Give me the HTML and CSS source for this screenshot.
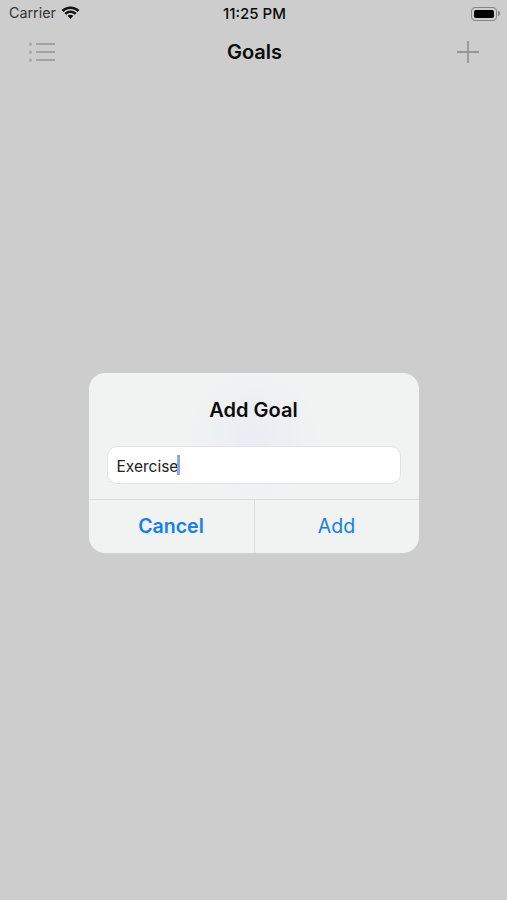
FILE: index.html
```html
<!DOCTYPE html>
<html lang="en">
<head>
  <meta charset="UTF-8" />
  <meta name="viewport" content="width=device-width, initial-scale=1.0"/>
  <title>Goals</title>
  <link rel="stylesheet" href="styles.css">
</head>
<body>
  <div class="status-bar">
    <div class="status-left">
      <span class="carrier">Carrier</span>
      <svg class="wifi" width="19" height="15" viewBox="0 0 19 15">
        <path d="M9.5 3C12.3 3 14.8 4.1 16.6 5.9L18.4 4C16 1.7 12.9.4 9.5.4S3 1.7.6 4l1.8 1.9C4.200 4.100 6.700 3 9.500 3z" fill="#111"/>
        <path d="M9.500 7.100c1.700 0 3.200.7 4.300 1.700l1.800-1.900C14 5.400 11.900 4.500 9.500 4.500S5 5.400 3.400 6.900l1.800 1.900C6.300 7.800 7.800 7.100 9.500 7.100z" fill="#111"/>
        <path d="M9.500 8.700c-1.100 0-2.100.4-2.900 1.100l2.900 3.200 2.900-3.200c-.8-.7-1.800-1.100-2.900-1.100z" fill="#111"/>
      </svg>
    </div>
    <span class="clock">11:25 PM</span>
    <div class="battery">
      <div class="battery-body"><div class="battery-level"></div></div>
      <div class="battery-tip"></div>
    </div>
  </div>

  <header class="nav-bar">
    <svg class="nav-list" width="28" height="22" viewBox="0 0 28 22">
      <circle cx="2.500" cy="3" r="1.600" fill="#a3a3a3"/>
      <circle cx="2.500" cy="11" r="1.600" fill="#a3a3a3"/>
      <circle cx="2.500" cy="19" r="1.600" fill="#a3a3a3"/>
      <path d="M8 3h19M8 11h19M8 19h19" stroke="#a3a3a3" stroke-width="2"/>
    </svg>
    <h1>Goals</h1>
    <svg class="nav-plus" width="22" height="22" viewBox="0 0 22 22">
      <path d="M11 0v22M0 11h22" stroke="#969696" stroke-width="1.800"/>
    </svg>
  </header>

  <main class="overlay">
    <div class="dialog">
      <div class="dialog-body">
        <h2>Add Goal</h2>
        <div class="field"><span>Exercise</span><i class="caret"></i></div>
      </div>
      <div class="dialog-actions">
        <button class="cancel">Cancel</button>
        <button class="add">Add</button>
      </div>
    </div>
  </main>
</body>
</html>
```

FILE: styles.css
```css
body {
  margin: 0;
  height: 900px;
  overflow: hidden;
  display: flex;
  flex-direction: column;
  background-color: #cdcdcd;
  font-family: Inter, 'Liberation Sans', sans-serif;
  color: #0a0a0a;
}

.status-bar {
  height: 27px;
  display: grid;
  grid-template-columns: 1fr auto 1fr;
  align-items: center;
  padding: 0 7px 0 9px;
  font-size: 14px;
}

.status-left {
  display: flex;
  align-items: center;
  gap: 5px;
}

.carrier {
  color: #333;
  font-size: 14.300px;
  padding-bottom: 2px;
}

.clock {
  font-weight: 500;
  font-size: 15px;
  padding-bottom: 1px;
}

.battery {
  justify-self: end;
  display: flex;
  align-items: center;
  gap: 1px;
}

.battery-body {
  width: 26px;
  height: 14px;
  padding: 2px;
  box-sizing: border-box;
  border: 1px solid #858585;
  border-radius: 4px;
}

.battery-level {
  height: 100%;
  background-color: #000;
  border-radius: 2px;
}

.battery-tip {
  width: 2px;
  height: 5px;
  background-color: #858585;
  border-radius: 0 2px 2px 0;
}

.nav-bar {
  height: 50px;
  display: grid;
  grid-template-columns: 1fr auto 1fr;
  align-items: center;
  padding: 0 28px;
}

.nav-bar h1 {
  margin: 0;
  padding-left: 2px;
  font-size: 20px;
  font-weight: 600;
}

.nav-plus {
  justify-self: end;
}

.overlay {
  display: flex;
  justify-content: center;
  padding-top: 296px;
}

.dialog {
  width: 330px;
  height: 180px;
  display: flex;
  flex-direction: column;
  background: radial-gradient(circle at 50% 35%, #e9eef5 0, #f1f2f2 32%);
  border-radius: 16px;
}

.dialog-body {
  flex: 1;
  padding: 25px 18px 0;
}

.dialog-body h2 {
  margin: 0 0 24px;
  font-size: 20px;
  line-height: 24px;
  font-weight: 600;
  text-align: center;
}

.field {
  height: 38px;
  display: flex;
  align-items: center;
  padding: 0 9px;
  box-sizing: border-box;
  background-color: #fff;
  border: 1px solid #e2e2e2;
  border-radius: 10px;
  font-size: 15.500px;
  color: #222;
}

.field span {
  padding-top: 2px;
}

.caret {
  width: 2.500px;
  height: 20px;
  margin-left: -1px;
  background-color: #8aa6ea;
}

.dialog-actions {
  height: 53px;
  display: grid;
  grid-template-columns: 1fr 1fr;
  border-top: 1px solid #dcdcdc;
}

.dialog-actions button {
  padding: 0 0 2px;
  border: none;
  background: none;
  font-family: inherit;
  font-size: 19.500px;
  color: #1580ec;
}

.dialog-actions .cancel {
  font-weight: 600;
}

.dialog-actions .add {
  border-left: 1px solid #dcdcdc;
}
```
